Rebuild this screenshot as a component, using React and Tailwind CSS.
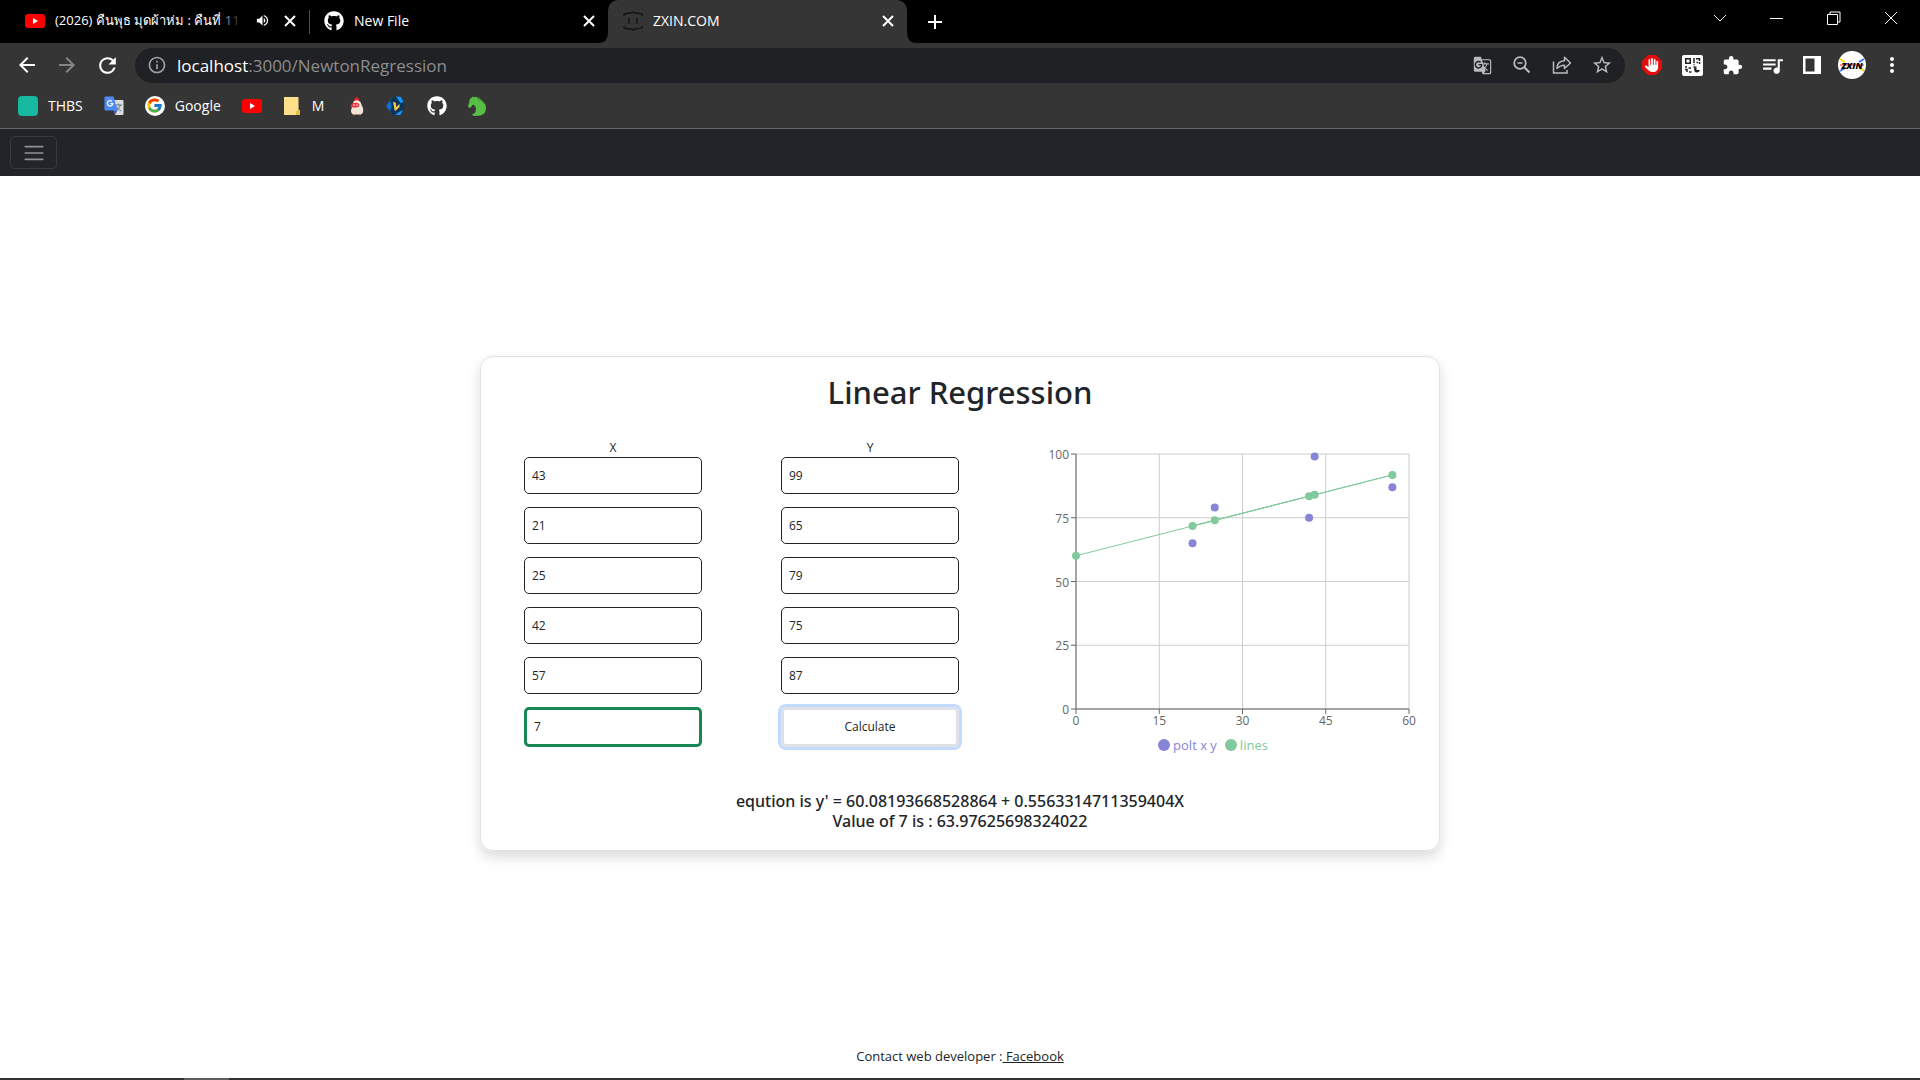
import React, { useState } from "react";
import {
  MdAdd,
  MdArrowBack,
  MdArrowForward,
  MdExtension,
  MdGTranslate,
  MdInfoOutline,
  MdMoreVert,
  MdQueueMusic,
  MdRefresh,
  MdStarBorder,
  MdVolumeUp,
} from "react-icons/md";
import { FaGithub, FaHand } from "react-icons/fa6";
import { FcGoogle } from "react-icons/fc";

const points = [
  { x: 43, y: 99 },
  { x: 21, y: 65 },
  { x: 25, y: 79 },
  { x: 42, y: 75 },
  { x: 57, y: 87 },
];
const intercept = 60.08193668528864;
const slope = 0.5563314711359404;

function YouTubeIcon() {
  return (
    <svg width="20" height="14" viewBox="0 0 20 14" aria-hidden="true">
      <rect width="20" height="14" rx="3" fill="#f00" />
      <path d="M8 4v6l5-3z" fill="#fff" />
    </svg>
  );
}

function BracketsIcon() {
  return (
    <svg width="20" height="20" viewBox="0 0 20 20" fill="none" stroke="#111" strokeWidth="1.3" aria-hidden="true">
      <path d="M1 5V3q4-1 7-1l2-1 2 1q4 0 7 1v2M1 15v2q4 1 7 1l2 1 2-1q4 0 7-1v-2M6 7v6M14 7v6" />
    </svg>
  );
}

function TranslateIcon() {
  return (
    <svg width="20" height="20" viewBox="0 0 20 20" aria-hidden="true">
      <path d="M8 4h10.500q1 0 1 1v13q0 1-1 1H11z" fill="#dcdcdc" />
      <path d="M11 9h7M14.500 7.500V9M16.500 9q-1 4-5 6M12.500 10.500q1.500 3 4.500 4.500" stroke="#607988" fill="none" />
      <path d="M1.500.500h8l4 14H1.500q-1 0-1-1v-12q0-1 1-1z" fill="#4c8bf5" />
      <path d="M10 14.500h3.500L11 19z" fill="#3a5fb8" />
      <path d="M8 5.400A2.700 2.700 0 1 0 8.800 7.600H6.300" stroke="#fff" strokeWidth="1.200" fill="none" />
    </svg>
  );
}

function NoteIcon() {
  return (
    <svg width="16" height="18" viewBox="0 0 16 18" aria-hidden="true">
      <path d="M0 0h14.500v12.500l1.500 1V18H0z" fill="#ffe08a" />
      <path d="M12 18v-3.500l2.500-2L16 14v4z" fill="#e8bd45" />
    </svg>
  );
}

function ChickenIcon() {
  return (
    <svg width="16" height="20" viewBox="0 0 16 20" aria-hidden="true">
      <path d="M5 5q0-2 1.500-3Q8-.5 9 2q2 .5 1 3z" fill="#d8232a" />
      <path d="M4.500 5.500q4-2.500 7 .5 1 3 2.500 6 1 5-2 6.500H4q-3-2-1.500-6z" fill="#f3e4d6" />
      <path d="M1.500 9.500Q3 6 6 7q3-1 4.500 1.500 0 3-3.500 3H4q-2.500 0-2.500-2z" fill="#e5363c" />
      <circle cx="5" cy="9" r=".8" fill="#fff" />
      <circle cx="8" cy="9" r=".8" fill="#fff" />
      <path d="M5 18v1.500M11 18v1.500" stroke="#c78b5c" />
    </svg>
  );
}

function HexIcon() {
  return (
    <svg width="20" height="20" viewBox="0 0 20 20" aria-hidden="true">
      <path d="M5.500 2.500 0 10l5.500 7.500L8 14 5 10l3-4z" fill="#0d6fd0" />
      <path d="M8 1h7l4 9-4 9H7l-3-4 2-5-2-5z" fill="#0a3558" />
      <path d="m10 .500 5 .500 2.500 5-3 1zM17 14l-2.500 5H9l4-3z" fill="#1596ff" />
      <path d="M7 5.500 10 7v4l3.500-3v3L9.500 15 8.500 14z" fill="#f5c64e" />
    </svg>
  );
}

function HorseIcon() {
  return (
    <svg width="18" height="20" viewBox="0 0 18 20" aria-hidden="true">
      <path
        d="M4.500 0 5 1.500 7.500.8Q12 1.500 14 4.500q4 3 4 7.500 0 8-9.500 8-3.500 0-5-1.500Q8 17.500 8 13q0-3-2.500-4.500Q4 9 3.500 10.500L2 12Q0 11.500 0 9.500 1.500 7 1.500 4 2 2 4 1.500z"
        fill="#57bd43"
      />
      <path d="M9 2q5 1.500 8 6" stroke="#2c7d25" fill="none" />
    </svg>
  );
}

function ZoomOutIcon() {
  return (
    <svg width="18" height="18" viewBox="0 0 18 18" fill="none" stroke="#b8babd" aria-hidden="true">
      <circle cx="7" cy="7" r="5.800" strokeWidth="1.800" />
      <path d="M4.500 7h5" strokeWidth="1.500" />
      <path d="m11.500 11.500 5 5" strokeWidth="2.200" />
    </svg>
  );
}

function ShareIcon() {
  return (
    <svg width="20" height="20" viewBox="0 0 20 20" fill="none" stroke="#b8babd" strokeWidth="1.500" aria-hidden="true">
      <path d="M1.500 6.500V18h13.500v-3" />
      <path d="M5 13.500q0-7.500 7.500-7.800V2.300L18.500 8l-6 5.500v-3.300q-4.500 0-7.500 3.300z" strokeLinejoin="round" />
    </svg>
  );
}

function AdBlockIcon() {
  return (
    <span className="relative flex size-5 items-center justify-center">
      <svg className="absolute inset-0" width="20" height="20" viewBox="0 0 20 20" aria-hidden="true">
        <path d="M6 0h8l6 6v8l-6 6H6l-6-6V6z" fill="#e40d0d" />
      </svg>
      <FaHand className="relative" size={14} color="#fff" />
    </span>
  );
}

function QrIcon() {
  return (
    <svg width="21" height="21" viewBox="0 0 21 21" aria-hidden="true">
      <rect width="21" height="21" rx="2" fill="#fff" />
      <g fill="none" stroke="#222" strokeWidth="1.500">
        <path d="M3.750 3.750h4.500v4.500h-4.500zM12 3v5M14 3.750h3.500V6M17.500 7v2M14.500 7.500h1.500" />
        <path d="M3 12h2M6.500 13h2.500M3 14.500h2v2.500M7 17h2.500M11.500 12h2M11.500 9.500h1" />
      </g>
      <path d="M14.500 11.500a3 3 0 1 0 3.500 3.500h-3.500z" fill="#222" />
    </svg>
  );
}

function SidePanelIcon() {
  return (
    <svg width="18" height="18" viewBox="0 0 18 18" aria-hidden="true">
      <path d="M0 0h18v18H0zM2.500 2.500v13h9v-13z" fill="#fff" fillRule="evenodd" />
    </svg>
  );
}

function Avatar() {
  return (
    <span className="relative flex size-7 items-center justify-center overflow-hidden rounded-full bg-white">
      <svg className="absolute inset-0" width="28" height="28" viewBox="0 0 28 28" fill="none" aria-hidden="true">
        <path d="m2 8 5 3M22 17l4 3" stroke="#ffd400" strokeWidth="2" />
        <path d="m26 8-5 3M2 20l5-3" stroke="#3f6fff" strokeWidth="2" />
        <path d="M2 14h24" stroke="#f22" />
      </svg>
      <span className="relative text-[9px] leading-none font-black text-black italic">ZXIN</span>
    </span>
  );
}

function TabFlare({ side }) {
  return (
    <svg
      className={side === "left" ? "absolute right-full bottom-0" : "absolute bottom-0 left-full"}
      width="10"
      height="10"
      viewBox="0 0 10 10"
      aria-hidden="true"
    >
      <path d={side === "left" ? "M10 0v10H0Q10 10 10 0z" : "M0 0v10h10Q0 10 0 0z"} fill="#353535" />
    </svg>
  );
}

function CloseTab() {
  return (
    <button type="button" aria-label="Close tab" className="flex size-4 items-center justify-center">
      <svg width="12" height="12" viewBox="0 0 12 12" fill="none" stroke="#fff" strokeWidth="2" aria-hidden="true">
        <path d="m1 1 10 10M11 1 1 11" />
      </svg>
    </button>
  );
}

function TabStrip() {
  return (
    <div className="flex h-[43px] items-center bg-black text-sm text-white">
      <div className="flex h-full w-[309px] items-center pr-[11px] pb-[2px] pl-[25px]">
        <YouTubeIcon />
        <span className="ml-[10px] flex-1 text-[13px] whitespace-nowrap">
          (2026) คืนพุธ มุดผ้าห่ม : คืนที่ <span className="text-[#8080a0]">1</span>
          <span className="text-[#404050]">1</span>
        </span>
        <MdVolumeUp className="mr-3" size={15} />
        <CloseTab />
      </div>
      <div className="h-6 w-px bg-[#4d4d4d]" />
      <div className="flex h-full w-[298px] items-center pr-[11px] pb-[2px] pl-[14px]">
        <FaGithub size={20} />
        <span className="ml-[10px] flex-1">New File</span>
        <CloseTab />
      </div>
      <div className="relative flex h-full w-[299px] items-center rounded-t-[10px] bg-[#353535] pr-[11px] pb-[2px] pl-[15px]">
        <TabFlare side="left" />
        <TabFlare side="right" />
        <BracketsIcon />
        <span className="ml-[10px] flex-1">ZXIN.COM</span>
        <CloseTab />
      </div>
      <button type="button" aria-label="New tab" className="ml-4 flex size-6 items-center justify-center">
        <MdAdd size={24} />
      </button>
      <div className="ml-auto flex h-full items-center pr-px pb-[7px]">
        {[
          ["Search tabs", "m1 4 6 6 6-6"],
          ["Minimize", "M0 7.500h13"],
          ["Restore", "M.5 3.500h10v10H.500zM3 3.500v-2.500h10v10h-2.500"],
          ["Close", "M1 1l12 12M13 1 1 13"],
        ].map(([label, d]) => (
          <button key={label} type="button" aria-label={label} className="flex h-full w-[57px] items-center justify-center">
            <svg width="14" height="14" viewBox="0 0 14 14" fill="none" stroke="#fff" aria-hidden="true">
              <path d={d} />
            </svg>
          </button>
        ))}
      </div>
    </div>
  );
}

function IconButton({ label, children }) {
  return (
    <button type="button" aria-label={label} className="flex h-7 w-10 items-center justify-center">
      {children}
    </button>
  );
}

function Toolbar() {
  return (
    <div className="flex h-11 items-center bg-[#353535] pr-2 pl-[7px] text-white">
      <IconButton label="Back"><MdArrowBack size={24} /></IconButton>
      <IconButton label="Forward"><MdArrowForward size={24} color="#868686" /></IconButton>
      <IconButton label="Reload"><MdRefresh size={25} /></IconButton>
      <div className="ml-2 flex h-[35px] min-w-0 flex-1 items-center rounded-full bg-[#202124] pr-[3px] pl-3 text-[#b8babd]">
        <MdInfoOutline size={20} color="#9aa0a6" />
        <a href="#address" className="ml-[10px] flex-1 pt-[2px] text-[17px] text-[#8b8d90]">
          <span className="text-white">localhost</span>:3000/NewtonRegression
        </a>
        <IconButton label="Translate this page"><MdGTranslate size={19} /></IconButton>
        <IconButton label="Zoom"><ZoomOutIcon /></IconButton>
        <IconButton label="Share"><ShareIcon /></IconButton>
        <IconButton label="Bookmark"><MdStarBorder size={22} /></IconButton>
      </div>
      <div className="ml-[7px] flex items-center">
        <IconButton label="AdBlock"><AdBlockIcon /></IconButton>
        <IconButton label="QR code"><QrIcon /></IconButton>
        <IconButton label="Extensions"><MdExtension size={21} /></IconButton>
        <IconButton label="Media"><MdQueueMusic size={25} /></IconButton>
        <IconButton label="Side panel"><SidePanelIcon /></IconButton>
        <IconButton label="Profile"><Avatar /></IconButton>
        <IconButton label="Menu"><MdMoreVert size={24} /></IconButton>
      </div>
    </div>
  );
}

function Bookmarks() {
  return (
    <nav aria-label="Bookmarks" className="flex h-[42px] items-center gap-[21px] border-b border-[#686868] bg-[#353535] pb-1 pl-[18px] text-sm text-white">
      <a href="#thbs" className="flex items-center gap-[10px]">
        <span className="size-5 rounded bg-[#17b8a0]" />
        THBS
      </a>
      <a href="#translate" aria-label="Translate"><TranslateIcon /></a>
      <a href="#google" className="flex items-center gap-[10px]">
        <span className="flex size-5 items-center justify-center rounded-full bg-white">
          <FcGoogle size={17} />
        </span>
        Google
      </a>
      <a href="#youtube" aria-label="YouTube"><YouTubeIcon /></a>
      <a href="#m" className="flex items-center gap-3 pr-1 pl-px">
        <NoteIcon />
        M
      </a>
      <a href="#chicken" aria-label="Chicken"><ChickenIcon /></a>
      <a href="#hex" aria-label="Hexagon"><HexIcon /></a>
      <a href="#github" aria-label="GitHub"><FaGithub size={20} /></a>
      <a href="#horse" aria-label="Horse"><HorseIcon /></a>
    </nav>
  );
}

function Field({ label, value, highlighted }) {
  const [text, setText] = useState(String(value));
  return (
    <input
      aria-label={label}
      value={text}
      onChange={(e) => setText(e.target.value)}
      className={
        highlighted
          ? "h-10 w-full rounded-[5px] border-3 border-[#198754] px-[7px] text-xs outline-none"
          : "h-[37px] w-full rounded-[5px] border border-[#212529] px-[7px] text-xs outline-none"
      }
    />
  );
}

function Chart() {
  const left = 38;
  const top = 14;
  const width = 333;
  const height = 255;
  const px = (x) => left + (x / 60) * width;
  const py = (y) => top + height - (y / 100) * height;
  const line = [...points.map((p) => p.x), 0].map((x) => ({ x, y: intercept + slope * x }));
  return (
    <div>
      <svg viewBox="0 0 378 297" className="block w-full text-xs" role="img" aria-label="Regression chart">
        <g stroke="#ccc">
          {[0, 15, 30, 45, 60].map((x) => (
            <line key={x} x1={px(x)} x2={px(x)} y1={top} y2={top + height} />
          ))}
          {[0, 25, 50, 75, 100].map((y) => (
            <line key={y} x1={left} x2={left + width} y1={py(y)} y2={py(y)} />
          ))}
        </g>
        <g stroke="#666">
          <path d={`M${left} ${top}v${height}h${width}`} fill="none" />
          {[0, 15, 30, 45, 60].map((x) => (
            <line key={x} x1={px(x)} x2={px(x)} y1={top + height} y2={top + height + 5} />
          ))}
          {[0, 25, 50, 75, 100].map((y) => (
            <line key={y} x1={left - 5} x2={left} y1={py(y)} y2={py(y)} />
          ))}
        </g>
        <g fill="#666">
          {[0, 15, 30, 45, 60].map((x) => (
            <text key={x} x={px(x)} y={top + height + 16} textAnchor="middle">{x}</text>
          ))}
          {[0, 25, 50, 75, 100].map((y) => (
            <text key={y} x={left - 7} y={py(y) + 5} textAnchor="end">{y}</text>
          ))}
        </g>
        <g fill="#8884d8">
          {points.map((p) => (
            <circle key={p.x} cx={px(p.x)} cy={py(p.y)} r="4" />
          ))}
        </g>
        <polyline points={line.map((p) => `${px(p.x)},${py(p.y)}`).join(" ")} fill="none" stroke="#82ca9d" />
        <g fill="#82ca9d">
          {line.map((p) => (
            <circle key={p.x} cx={px(p.x)} cy={py(p.y)} r="4" />
          ))}
        </g>
      </svg>
      <div className="flex h-4 items-center justify-center gap-2 pr-7 text-[13px] leading-4">
        <span className="flex items-center gap-[3px] text-[#8884d8]">
          <span className="size-3 rounded-full bg-[#8884d8]" />
          polt x y
        </span>
        <span className="flex items-center gap-[3px] text-[#82ca9d]">
          <span className="size-3 rounded-full bg-[#82ca9d]" />
          lines
        </span>
      </div>
    </div>
  );
}

export default function App() {
  return (
    <div className="flex min-h-screen flex-col bg-white font-['Open_Sans','Noto_Sans',sans-serif] text-[#212529]">
      <header>
        <TabStrip />
        <Toolbar />
        <Bookmarks />
      </header>
      <div className="flex h-[47px] items-center bg-[#212529] pl-[10px]">
        <button type="button" aria-label="Toggle navigation" className="flex h-[33px] w-[47px] items-center justify-center rounded-[5px] border border-[#373b3e]">
          <svg width="24" height="24" viewBox="0 0 30 30" stroke="#909294" strokeWidth="2" strokeLinecap="round" aria-hidden="true">
            <path d="M4 7h22M4 15h22M4 23h22" />
          </svg>
        </button>
      </div>
      <main className="flex flex-1 flex-col items-center justify-center">
        <section className="w-1/2 rounded-[13px] border border-[#dee2e6] pt-[11px] pr-[23px] pb-[19px] pl-[43px] shadow-[0_6px_13px_rgba(0,0,0,0.15)]">
          <h1 className="pr-5 text-center font-['Noto_Sans','Open_Sans',sans-serif] text-[31px] leading-[48px] font-medium">Linear Regression</h1>
          <div className="mt-6 grid grid-cols-[178fr_178fr_378fr] gap-x-[79px] text-xs">
            <div>
              <div className="pb-[2px] text-center leading-[15px]">X</div>
              <div className="flex flex-col gap-[13px]">
                {points.map((p, i) => (
                  <Field key={i} label={`X ${i + 1}`} value={p.x} />
                ))}
                <Field label="X value to solve" value={7} highlighted />
              </div>
            </div>
            <div>
              <div className="pb-[2px] text-center leading-[15px]">Y</div>
              <div className="flex flex-col gap-[13px]">
                {points.map((p, i) => (
                  <Field key={i} label={`Y ${i + 1}`} value={p.y} />
                ))}
                <button type="button" className="h-10 w-full rounded-[5px] border-3 border-[#dee2e6] ring-3 ring-[#c2dbfe]">
                  Calculate
                </button>
              </div>
            </div>
            <Chart />
          </div>
          <div className="mt-[38px] pr-5 text-center font-['Noto_Sans','Open_Sans',sans-serif] text-base leading-5 font-medium">
            <p>eqution is y' = {intercept} + {slope}X</p>
            <p>Value of 7 is : 63.97625698324022</p>
          </div>
        </section>
      </main>
      <footer className="flex h-12 items-center justify-center pt-[6px] text-[13px] whitespace-pre">
        Contact web developer :<a href="#facebook" className="underline"> Facebook</a>
      </footer>
      <div className="h-[2px] bg-[#333]">
        <div className="ml-[184px] h-full w-[45px] bg-[#5f5f5f]" />
      </div>
    </div>
  );
}
